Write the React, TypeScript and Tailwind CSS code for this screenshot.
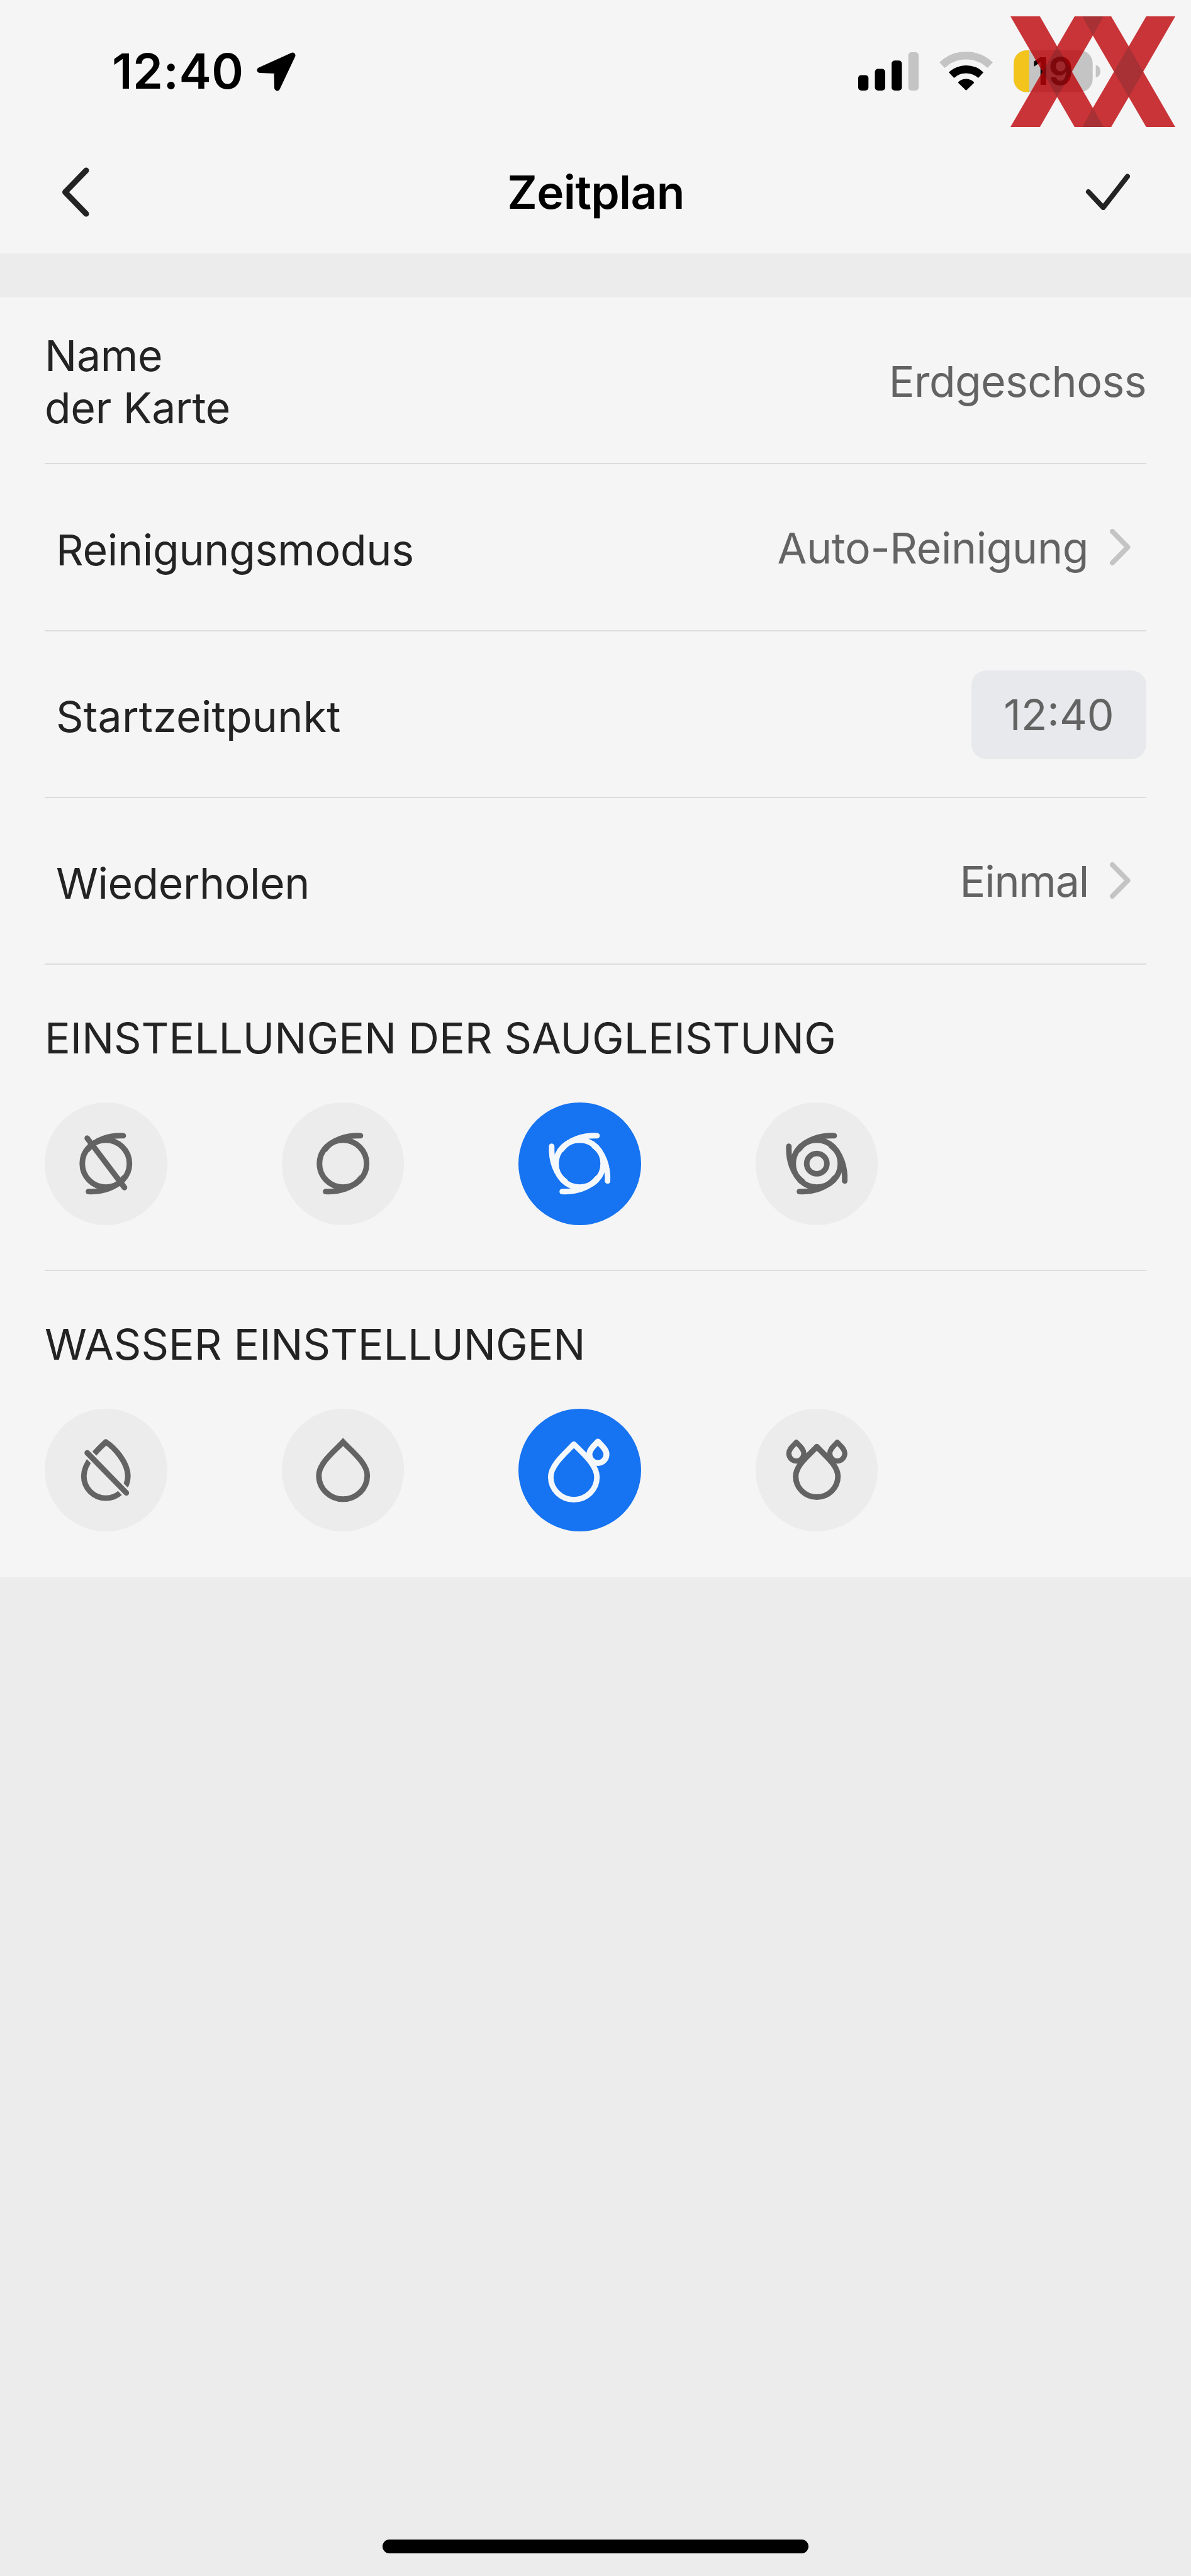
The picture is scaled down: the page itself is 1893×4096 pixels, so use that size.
import type { ReactNode } from "react";
import clsx from "clsx";

function StatusBar() {
  return (
    <div className="flex items-center justify-between h-[227px] pl-[178px] pr-[142px]">
      <div className="flex items-center">
        <span className="text-[77px] leading-none font-semibold text-black tracking-[0.5px]">12:40</span>
        <svg className="w-[62px] h-[62px] ml-[20px]" viewBox="0 0 62 62">
          <path
            d="M5 28.5 L57 5 L32.5 57 L32 29.5 Z"
            fill="#000"
            stroke="#000"
            strokeWidth="9"
            strokeLinejoin="round"
          />
        </svg>
      </div>

      {/* Signal, wifi, battery */}
      <svg className="w-[388px] h-[90px] overflow-visible" viewBox="1382 68 394 91">
        <rect x="1383" y="119" width="16.6" height="25" rx="5" />
        <rect x="1410" y="109" width="16.6" height="35" rx="5" />
        <rect x="1437" y="95.5" width="16.6" height="48.5" rx="5" />
        <rect x="1464" y="82" width="16.6" height="62" rx="5" fill="#c4c4c4" />
        <path d="M1518.5 103 A56 56 0 0 1 1596 103" fill="none" stroke="#c4c4c4" strokeWidth="12.5" />
        <path d="M1533.5 119 A35 35 0 0 1 1581 119" fill="none" stroke="#000" strokeWidth="12.5" />
        <path
          d="M1546 131 A17 17 0 0 1 1568.5 131 L1557.3 142 Z"
          stroke="#000"
          strokeWidth="3"
          strokeLinejoin="round"
        />
        <clipPath id="battery">
          <rect x="1634" y="79" width="127.5" height="67.5" rx="21" />
        </clipPath>
        <g clipPath="url(#battery)">
          <rect x="1634" y="79" width="128" height="68" fill="#c4c4c4" />
          <rect x="1634" y="79" width="25" height="68" fill="#f3c41b" />
        </g>
        <path d="M1766.5 103 C1776.5 104 1776.5 121.5 1766.5 122.7 Z" fill="#c4c4c4" />
        <text x="1697" y="134.5" fontSize="61" fontWeight="700" textAnchor="middle">
          19
        </text>
      </svg>
    </div>
  );
}

function Watermark() {
  return (
    <svg className="absolute top-[26px] left-[1606px] w-[262px] h-[176px]" viewBox="0 0 265 178.4" preserveAspectRatio="none">
      <path
        fill="#be0409"
        fillOpacity="0.8"
        d="M0 0H47.4L75.1 48.4L103.2 0H162L190.2 48.4L218.3 0H265L213.5 89.2L265 178.4H218.3L190.2 130L162 178.4H103.2L75.1 130L47.4 178.4H0L51.5 89.2ZM132.5 31L99 89.2L132.5 147.4L166.5 89.2Z"
        fillRule="evenodd"
      />
      <path
        fill="#002125"
        fillOpacity="0.17"
        d="M115.7 0H149.6L132.5 31ZM115.7 178.4H149.6L132.5 147.4ZM75.1 48.4L99 89.2L75.1 130L51.5 89.2ZM190.2 48.4L213.5 89.2L190.2 130L166.5 89.2Z"
      />
    </svg>
  );
}

function Chevron() {
  return (
    <svg className="w-[33px] h-[58px] ml-[34px] mr-[25px]" viewBox="0 0 33 58" fill="none">
      <path d="M4 4 L28.5 29 L4 54" stroke="#c4c4c4" strokeWidth="8" strokeLinecap="round" strokeLinejoin="round" />
    </svg>
  );
}

function Row({ label, className, children }: { label: string; className?: string; children: ReactNode }) {
  return (
    <div className="flex items-center justify-between h-[265.25px] border-b-2 border-[#dcdcdc]">
      <span className={clsx("pl-[18px] pt-2", className)}>{label}</span>
      <div className="flex items-center text-[#636363]">{children}</div>
    </div>
  );
}

const tail = "M28 -45 C6 -46 -17 -39 -29 -23";

function Suction({ level }: { level: number }) {
  return (
    <>
      <circle r="38" />
      <path d={tail} />
      <path d={tail} transform="rotate(180)" />
      {level === 0 && <path d="M-30 -41 L30 38.5" />}
      {level > 1 && <path d={tail} transform="rotate(90)" />}
      {level > 1 && <path d={tail} transform="rotate(270)" />}
      {level > 2 && <circle r="16.3" />}
    </>
  );
}

const smallDrop = "M0 -19.5 C-5 -14 -13 -8 -13 0 A13 13 0 0 0 13 0 C13 -8 5 -14 0 -19.5 Z";

function Water({ level }: { level: number }) {
  if (level === 0) {
    return (
      <>
        <path
          strokeLinejoin="round"
          d="M0 -45 C-12 -34 -35.5 -12 -35.5 10 A35.5 35.5 0 0 0 35.5 10 C35.5 -12 14 -36 0 -45 Z"
        />
        <path d="M-30 -27.5 L33 37" stroke="#ececec" strokeWidth="15" />
        <path d="M-30 -27.5 L33 37" />
      </>
    );
  }
  if (level === 1) {
    return (
      <path
        strokeLinejoin="miter"
        d="M0 -45 C-14 -30 -39 -11 -39 9 A39 38.2 0 0 0 39 9 C39 -11 14 -30 0 -45 Z"
      />
    );
  }
  if (level === 2) {
    return (
      <>
        <path d="M-9.3 -41.5 C-22 -28 -46.5 -8 -46.5 11.5 A37.2 36.5 0 0 0 27.9 11.5 C27.9 -8 4 -28 -9.3 -41.5 Z" />
        <path d={smallDrop} transform="translate(29.5 -25) scale(1.06)" />
      </>
    );
  }
  return (
    <>
      <path d="M0 -37.5 C-12 -24 -34 -8 -34 10.5 A34 33.3 0 0 0 34 10.5 C34 -8 12 -24 0 -37.5 Z" />
      <path d={smallDrop} transform="translate(-33 -26.5) scale(0.93)" />
      <path d={smallDrop} transform="translate(33 -26.5) scale(0.93)" />
    </>
  );
}

function Section({ title, icon: Icon, last }: { title: string; icon: typeof Water; last?: boolean }) {
  return (
    <div className={clsx("h-[487px] pt-[75px]", !last && "border-b-2 border-[#dcdcdc]")}>
      <h2 className="leading-[82px] whitespace-nowrap tracking-[-0.1px]">{title}</h2>
      <div className="flex gap-[182px] mt-[62px]">
        {[0, 1, 2, 3].map((level) => (
          <button
            key={level}
            className={clsx(
              "w-[194.5px] h-[194.5px] rounded-full",
              level === 2 ? "bg-[#1673f1] text-[#f5f8fb]" : "bg-[#ececec] text-[#636363]"
            )}
          >
            <svg
              className="w-full h-full"
              viewBox="-98.6 -98.6 197.2 197.2"
              fill="none"
              stroke="currentColor"
              strokeWidth="9"
              strokeLinecap="round"
              strokeLinejoin="round"
            >
              <Icon level={level} />
            </svg>
          </button>
        ))}
      </div>
    </div>
  );
}

export default function App() {
  return (
    <div className="relative flex flex-col w-[1893px] h-[4096px] overflow-hidden bg-[#ececec] font-['Inter',sans-serif] text-[68px] text-[#232323]">
      <header className="h-[403px] bg-[#f5f5f5]">
        <StatusBar />
        <div className="flex items-center justify-between h-[156px] pl-[98px] pr-[97px]">
          <svg className="w-[44px] h-[79px] mr-[27px]" viewBox="0 0 44 79" fill="none">
            <path d="M39 5 L5.5 39.5 L39 74" stroke="#232323" strokeWidth="9" strokeLinecap="round" strokeLinejoin="round" />
          </svg>
          <h1 className="text-[73px] leading-none font-semibold text-black tracking-[-0.7px]">Zeitplan</h1>
          <svg className="w-[71px] h-[58px]" viewBox="0 0 71 58" fill="none">
            <path d="M5 29 L28.5 54 L67 4.5" stroke="#232323" strokeWidth="8" strokeLinecap="round" strokeLinejoin="round" />
          </svg>
        </div>
      </header>

      <main className="mt-[70px] px-[71px] bg-[#f5f5f5]">
        <div className="flex items-center justify-between h-[265.25px] border-b-2 border-[#dcdcdc]">
          <span className="leading-[83px] pt-1 tracking-[-0.3px]">
            Name
            <br />
            der Karte
          </span>
          <span className="pt-[2px] text-[#636363] tracking-[-0.6px]">Erdgeschoss</span>
        </div>
        <Row label="Reinigungsmodus" className="tracking-[-0.3px]">
          <span className="pt-[2px] tracking-[-0.4px]">Auto-Reinigung</span>
          <Chevron />
        </Row>
        <Row label="Startzeitpunkt" className="tracking-[0.2px]">
          <div className="flex items-center justify-center w-[278px] h-[141px] mt-[2px] rounded-[24px] bg-[#e8e9ec]">
            12:40
          </div>
        </Row>
        <Row label="Wiederholen" className="tracking-[-0.5px]">
          <span className="pt-[2px] tracking-[-1.2px]">Einmal</span>
          <Chevron />
        </Row>
        <Section title="EINSTELLUNGEN DER SAUGLEISTUNG" icon={Suction} />
        <Section title="WASSER EINSTELLUNGEN" icon={Water} last />
      </main>

      {/* Home indicator */}
      <div className="w-[677px] h-[22px] mt-auto mb-[36px] mx-auto rounded-full bg-black" />
      <Watermark />
    </div>
  );
}
